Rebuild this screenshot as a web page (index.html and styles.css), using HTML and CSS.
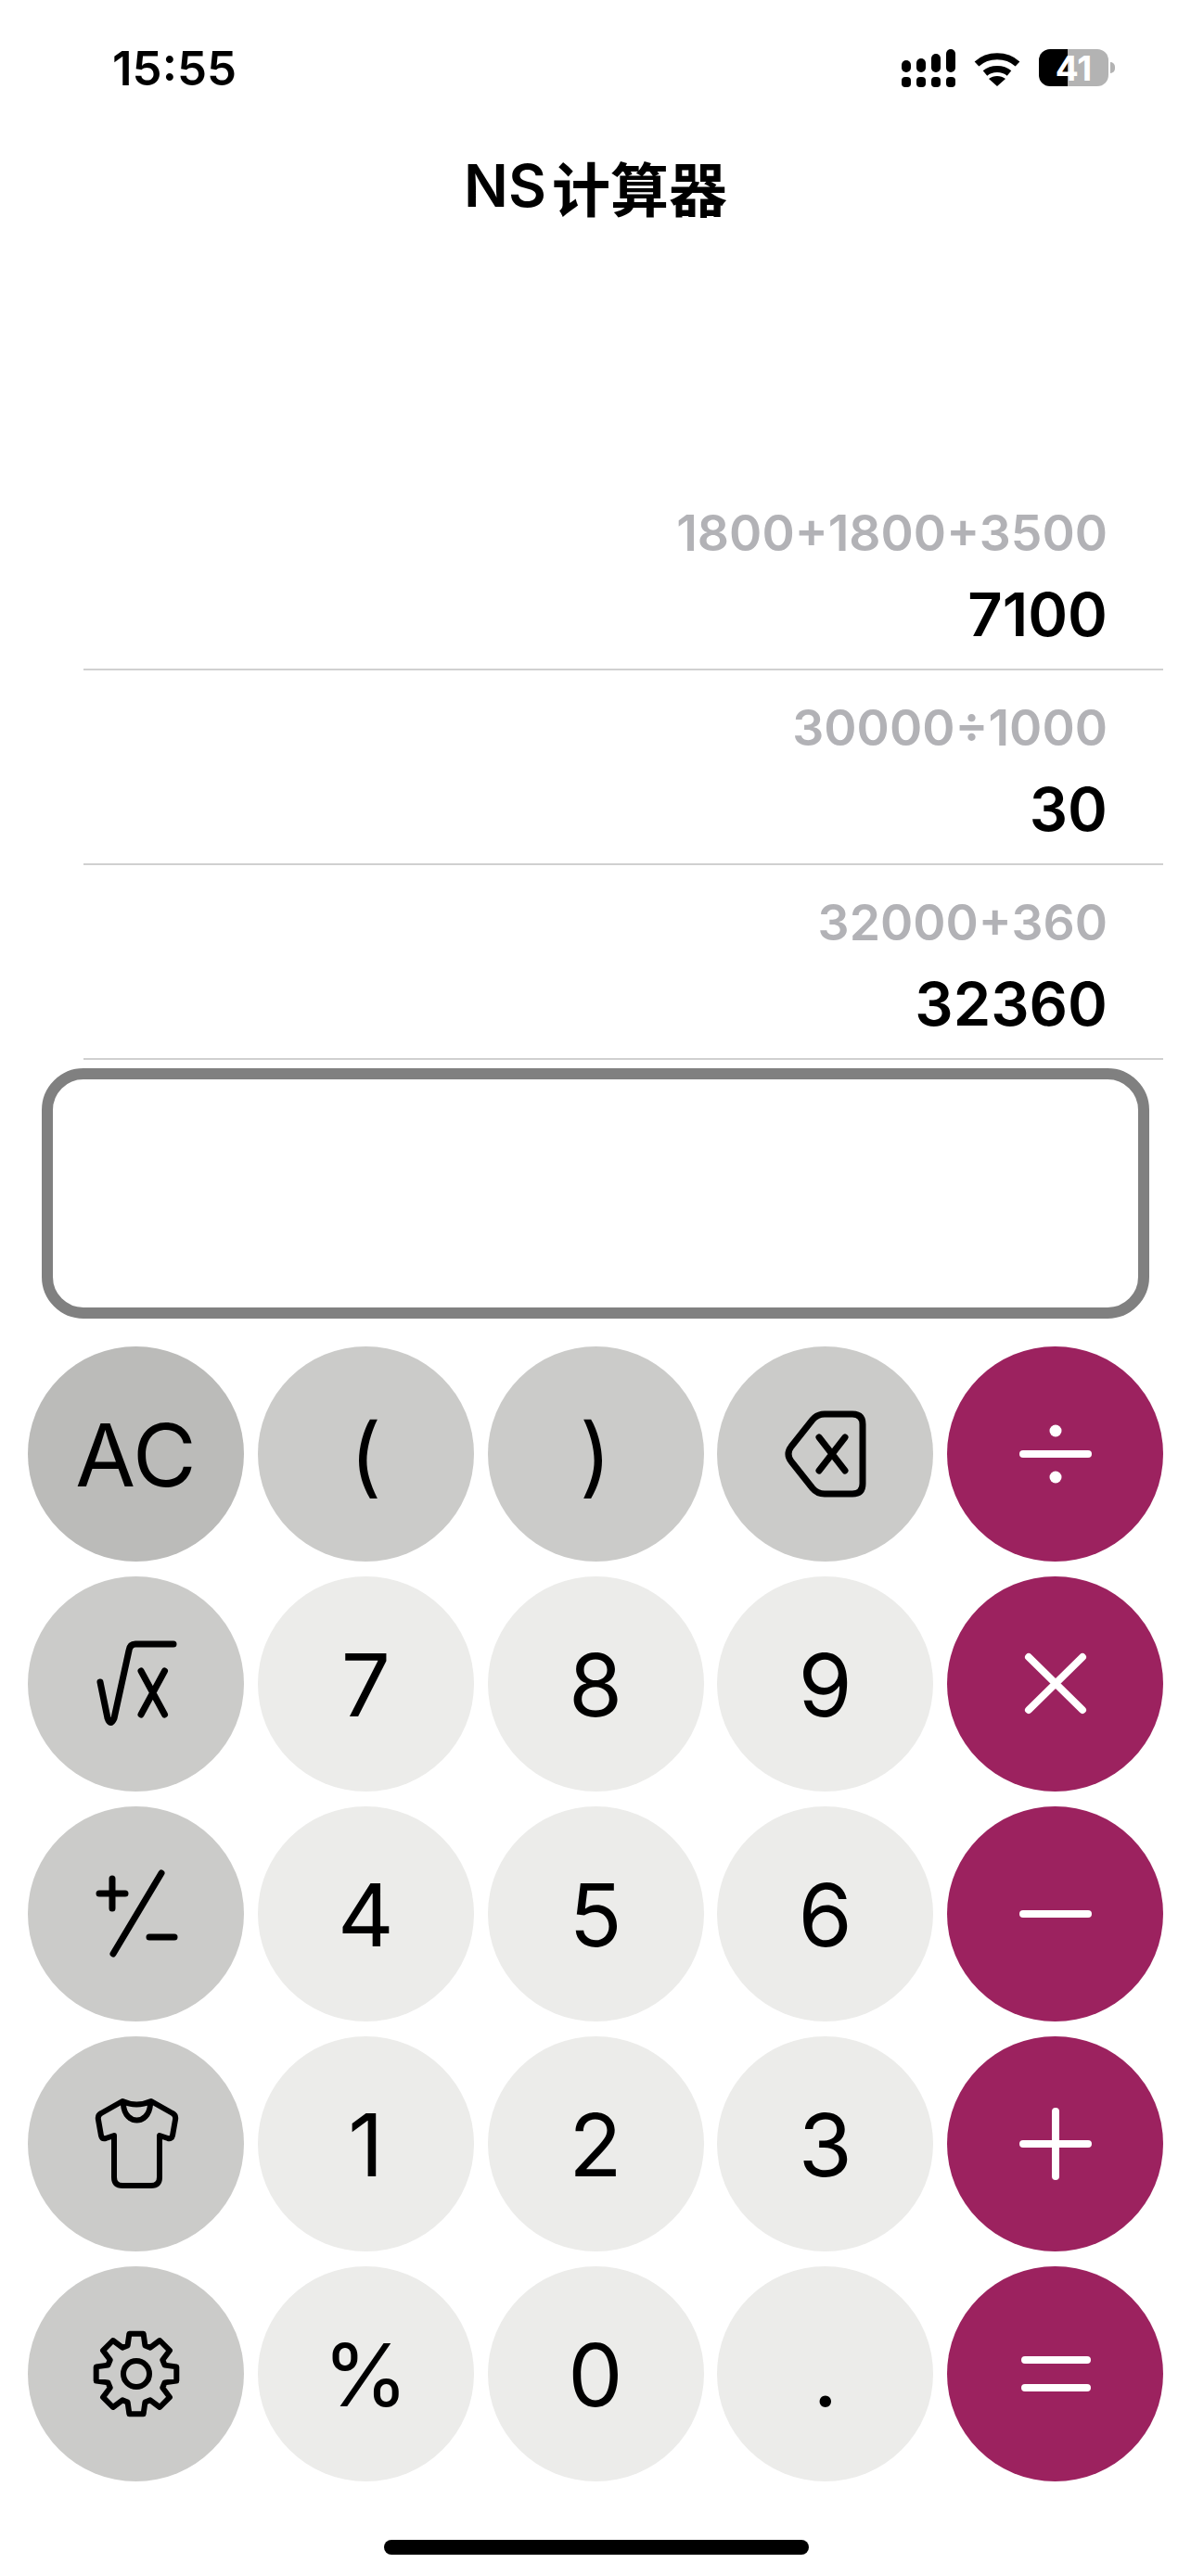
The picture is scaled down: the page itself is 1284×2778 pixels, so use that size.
FILE: index.html
```html
<!DOCTYPE html>
<html lang="zh">
<head>
<meta charset="utf-8">
<title>NS计算器</title>
<link rel="stylesheet" href="styles.css">
</head>
<body>
<div class="app">
  <header class="status">
    <span class="time">15:55</span>
    <div class="status-icons">
      <svg class="signal" width="58" height="41" viewBox="0 0 58 41"><g class="fill-black">
        <rect x="0" y="12" width="10" height="13" rx="5"/><rect x="16" y="10" width="10" height="15" rx="5"/><rect x="32" y="5" width="10" height="20" rx="5"/><rect x="48" y="0" width="10" height="25" rx="5"/>
        <rect x="0" y="30" width="10" height="11" rx="4"/><rect x="16" y="30" width="10" height="11" rx="4"/><rect x="32" y="30" width="10" height="11" rx="4"/><rect x="48" y="30" width="10" height="11" rx="4"/></g></svg>
      <svg class="wifi" width="52" height="39" viewBox="0 0 52 39"><g class="wifi-arcs">
        <path d="M4 15C16 4 36 4 48 15"/><path d="M13 25C20 19 32 19 39 25"/></g>
        <path class="fill-black" d="M26 39L17 31C22 27 30 27 35 31Z"/></svg>
      <div class="battery"><span class="battery-num">41</span></div>
      <span class="battery-nub"></span>
    </div>
  </header>
  <h1 class="title">NS<span class="title-cjk">计算器</span></h1>
  <section class="history">
    <div class="row"><div class="expr">1800+1800+3500</div><div class="result">7100</div></div>
    <div class="row"><div class="expr">30000÷1000</div><div class="result">30</div></div>
    <div class="row"><div class="expr">32000+360</div><div class="result">32360</div></div>
  </section>
  <div class="input"></div>
  <section class="keys">
    <button class="key ac">AC</button>
    <button class="key fn">(</button>
    <button class="key fn">)</button>
    <button class="key fn"><svg class="ico" viewBox="0 0 232 232"><path d="M115 73H145Q156 73 156 84V148Q156 159 145 159H115Q107 159 102 153L79 124Q73 116 79 108L102 79Q107 73 115 73Z"/><path d="M109 98L137 134M137 98L109 134"/></svg></button>
    <button class="key op"><svg class="ico" viewBox="0 0 232 232"><path d="M81 116H151"/><circle class="dot" cx="116" cy="91" r="6.5"/><circle class="dot" cx="116" cy="141" r="6.5"/></svg></button>

    <button class="key fn"><svg class="ico" viewBox="0 0 232 232"><path d="M77 114L85 153Q88 162 92 153L108 80Q109 73 115 73H156"/><path d="M121 102L146.500 149M146.500 102L121 149"/></svg></button>
    <button class="key num">7</button>
    <button class="key num">8</button>
    <button class="key num">9</button>
    <button class="key op"><svg class="ico" viewBox="0 0 232 232"><path d="M87 87L145 144M145 87L87 144"/></svg></button>

    <button class="key fn"><svg class="ico" viewBox="0 0 232 232"><path d="M76 94H104M90 78V110"/><path d="M143 72L91 159"/><path d="M130 141H157"/></svg></button>
    <button class="key num">4</button>
    <button class="key num">5</button>
    <button class="key num">6</button>
    <button class="key op"><svg class="ico" viewBox="0 0 232 232"><path d="M81 116H151"/></svg></button>

    <button class="key fn"><svg class="ico thin" viewBox="0 0 232 232"><path d="M101 70Q116 77 132 70L155 83Q159 85 158 90L155 107Q154 111 150 110L141 107V152Q141 161 132 161H101Q92 161 92 152V107L83 110Q79 111 78 107L75 90Q74 85 78 83Z"/><path d="M102 74C104 96 129 96 131 74"/></svg></button>
    <button class="key num">1</button>
    <button class="key num">2</button>
    <button class="key num">3</button>
    <button class="key op"><svg class="ico" viewBox="0 0 232 232"><path d="M81 116H151M116 81V151"/></svg></button>

    <button class="key fn"><svg class="ico thin" viewBox="-116 -116 232 232"><polygon points="-9.400,-30.600 -7.600,-43.300 7.600,-43.300 9.400,-30.600 15,-28.300 25.200,-36 36,-25.200 28.300,-15 30.600,-9.400 43.300,-7.600 43.300,7.600 30.600,9.400 28.300,15 36,25.200 25.200,36 15,28.300 9.400,30.600 7.600,43.300 -7.600,43.300 -9.400,30.600 -15,28.300 -25.200,36 -36,25.200 -28.300,15 -30.600,9.400 -43.300,7.600 -43.300,-7.600 -30.600,-9.400 -28.300,-15 -36,-25.200 -25.200,-36 -15,-28.300"/><circle cx="0" cy="0" r="14"/></svg></button>
    <button class="key num">%</button>
    <button class="key num">0</button>
    <button class="key num">.</button>
    <button class="key op"><svg class="ico" viewBox="0 0 232 232"><path d="M83 101H150M83 131H150"/></svg></button>
  </section>
  <div class="home"></div>
</div>
</body>
</html>
```
FILE: styles.css
```css
* { box-sizing: border-box; }
html, body { margin: 0; padding: 0; background: #fff; }
body { font-family: Inter, "Noto Sans CJK SC", sans-serif; color: #000; }
.app { width: 1284px; height: 2778px; overflow: hidden; }

.status { height: 146px; display: flex; align-items: center; justify-content: space-between; padding: 0 82px 0 121px; }
.time { font-size: 51px; font-weight: 600; line-height: 1; }
.status-icons { display: flex; align-items: center; }
.signal { margin-right: 19px; }
.wifi { margin-right: 19px; }
.fill-black { fill: #000; }
.wifi-arcs { fill: none; stroke: #000; stroke-width: 7px; }
.battery { width: 75px; height: 40px; border-radius: 12px; background: linear-gradient(90deg, #000 31px, #b3b3b3 31px); display: flex; align-items: center; justify-content: center; }
.battery-num { color: #fff; font-size: 37px; font-weight: 700; line-height: 1; }
.battery-nub { width: 5px; height: 12px; margin-left: 2px; border-radius: 0 6px 6px 0; background: #b3b3b3; }

.title { height: 108px; margin: 0; display: flex; align-items: center; justify-content: center; font-size: 63px; font-weight: 600; line-height: 1; }
.title-cjk { margin-left: 6px; font-family: "Noto Sans CJK SC", sans-serif; font-weight: 700; }

.history { margin: 259px 30px 0 90px; }
.row { height: 210px; border-bottom: 2px solid #d0d0d0; display: flex; flex-direction: column; align-items: flex-end; padding: 32px 60px 0 0; }
.expr { font-size: 53.5px; line-height: 60px; color: #b2b2b6; font-weight: 600; }
.result { margin-top: 23px; font-size: 65px; line-height: 70px; font-weight: 600; }

.input { width: 1194px; height: 270px; margin: 9px 0 0 45px; border: 12px solid #808080; border-radius: 45px; background: #fff; }

.keys { display: grid; grid-template-columns: repeat(5, 233px); grid-auto-rows: 232px; column-gap: 14.75px; row-gap: 16px; margin: 30px 0 0 30px; }
.key { width: 233px; height: 232px; padding: 2px 0 0; border: 0; border-radius: 50%; display: flex; align-items: center; justify-content: center; font-family: Inter, sans-serif; font-size: 94px; font-weight: 400; line-height: 1; color: #000; }
.ac { background: #bbbbb9; }
.fn { background: #cbcbc9; }
.num { background: #ececea; }
.op { background: #9c225f; }
.ico { width: 232px; height: 232px; margin-top: -2px; flex: none; fill: none; stroke: #000; stroke-width: 7px; stroke-linecap: round; stroke-linejoin: round; }
.ico.thin { stroke-width: 6px; }
.op .ico { stroke: #fff; stroke-width: 8px; }
.op .ico .dot { fill: #fff; stroke: none; }

.home { width: 458px; height: 16px; margin: 63px 0 0 414px; border-radius: 8px; background: #000; }
```
